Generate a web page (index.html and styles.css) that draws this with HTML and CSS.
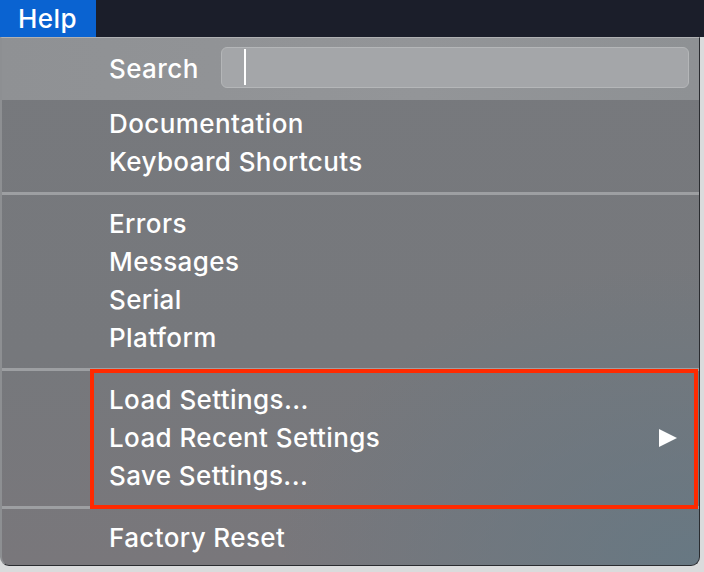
FILE: index.html
```html
<!DOCTYPE html>
<html>
<head>
<meta charset="utf-8">
<link rel="stylesheet" href="styles.css">
</head>
<body>
<div class="topbar"><div class="help">Help</div></div>
<div class="menu">
  <div class="search-row">
    <span class="label">Search</span>
    <div class="input"><span class="caret"></span></div>
  </div>
  <div class="group first">
    <div class="item">Documentation</div>
    <div class="item">Keyboard Shortcuts</div>
  </div>
  <div class="sep"></div>
  <div class="group">
    <div class="item">Errors</div>
    <div class="item">Messages</div>
    <div class="item">Serial</div>
    <div class="item">Platform</div>
  </div>
  <div class="sep"></div>
  <div class="group">
    <div class="item">Load Settings...</div>
    <div class="item sub">Load Recent Settings <svg class="arrow" width="20" height="20" viewBox="0 0 20 20"><polygon points="1,1 19,10 1,19" fill="#fff"/></svg></div>
    <div class="item">Save Settings...</div>
  </div>
  <div class="sep"></div>
  <div class="group last">
    <div class="item">Factory Reset</div>
  </div>
  <div class="highlight"></div>
</div>
<div class="below"></div>
</body>
</html>
```
FILE: styles.css
```css
html, body {
  margin: 0;
  padding: 0;
}
body {
  width: 704px;
  height: 572px;
  overflow: hidden;
  background: linear-gradient(100deg, #c8285a 0, #c8285a 20px, #dadbdc 60px);
  font-family: Inter, "Noto Sans", sans-serif;
  font-weight: 500;
  letter-spacing: 0.4px;
  color: #fff;
}
.topbar {
  height: 37px;
  background: #1b1e2a;
  display: flex;
}
.help {
  width: 96px;
  background: #0a63d1;
  font-size: 26px;
  line-height: 37px;
  padding-left: 18px;
  box-sizing: border-box;
}
.menu {
  position: relative;
  width: 700px;
  height: 529px;
  box-sizing: border-box;
  border-top: 1px solid #b0b1b3;
  border-left: 2px solid #8d8f92;
  border-right: 1px solid #2a2c30;
  border-bottom: 1px solid #2a2c30;
  border-radius: 0 0 9px 9px;
  background:
    radial-gradient(ellipse 420px 300px at 100% 100%, rgba(100,120,132,0.85), rgba(100,120,132,0) 100%),
    linear-gradient(180deg, #77797d 0%, #76787c 60%, #79777b 100%);
  overflow: hidden;
  font-size: 26px;
}
.search-row {
  height: 62px;
  background: linear-gradient(90deg, #8f9194, #939598 60%, #8e9194);
  display: flex;
  align-items: center;
  padding-left: 107px;
  padding-right: 10px;
  box-sizing: border-box;
}
.label {
  width: 112px;
  position: relative;
  top: -1px;
}
.input {
  flex: 1;
  height: 41px;
  margin-top: -4px;
  box-sizing: border-box;
  border: 1px solid #b4b6b8;
  border-radius: 6px;
  background: #a4a6a9;
  display: flex;
  align-items: center;
  padding-left: 22px;
}
.caret {
  width: 2px;
  height: 36px;
  background: #fff;
}
.group {
  padding: 10px 0 11px 107px;
}
.group.first {
  padding-top: 5px;
}
.group.last {
  padding-bottom: 0;
}
.item {
  height: 38px;
  line-height: 38px;
  display: flex;
  align-items: center;
  white-space: nowrap;
}
.item.sub {
  position: relative;
}
.arrow {
  position: absolute;
  left: 549px;
  top: 9px;
}
.sep {
  height: 3px;
  background: #9d9fa2;
}
.highlight {
  position: absolute;
  left: 88px;
  top: 331px;
  width: 608px;
  height: 140px;
  box-sizing: border-box;
  border: 4px solid #ff2a00;
}
.below {
  height: 6px;
}
```
